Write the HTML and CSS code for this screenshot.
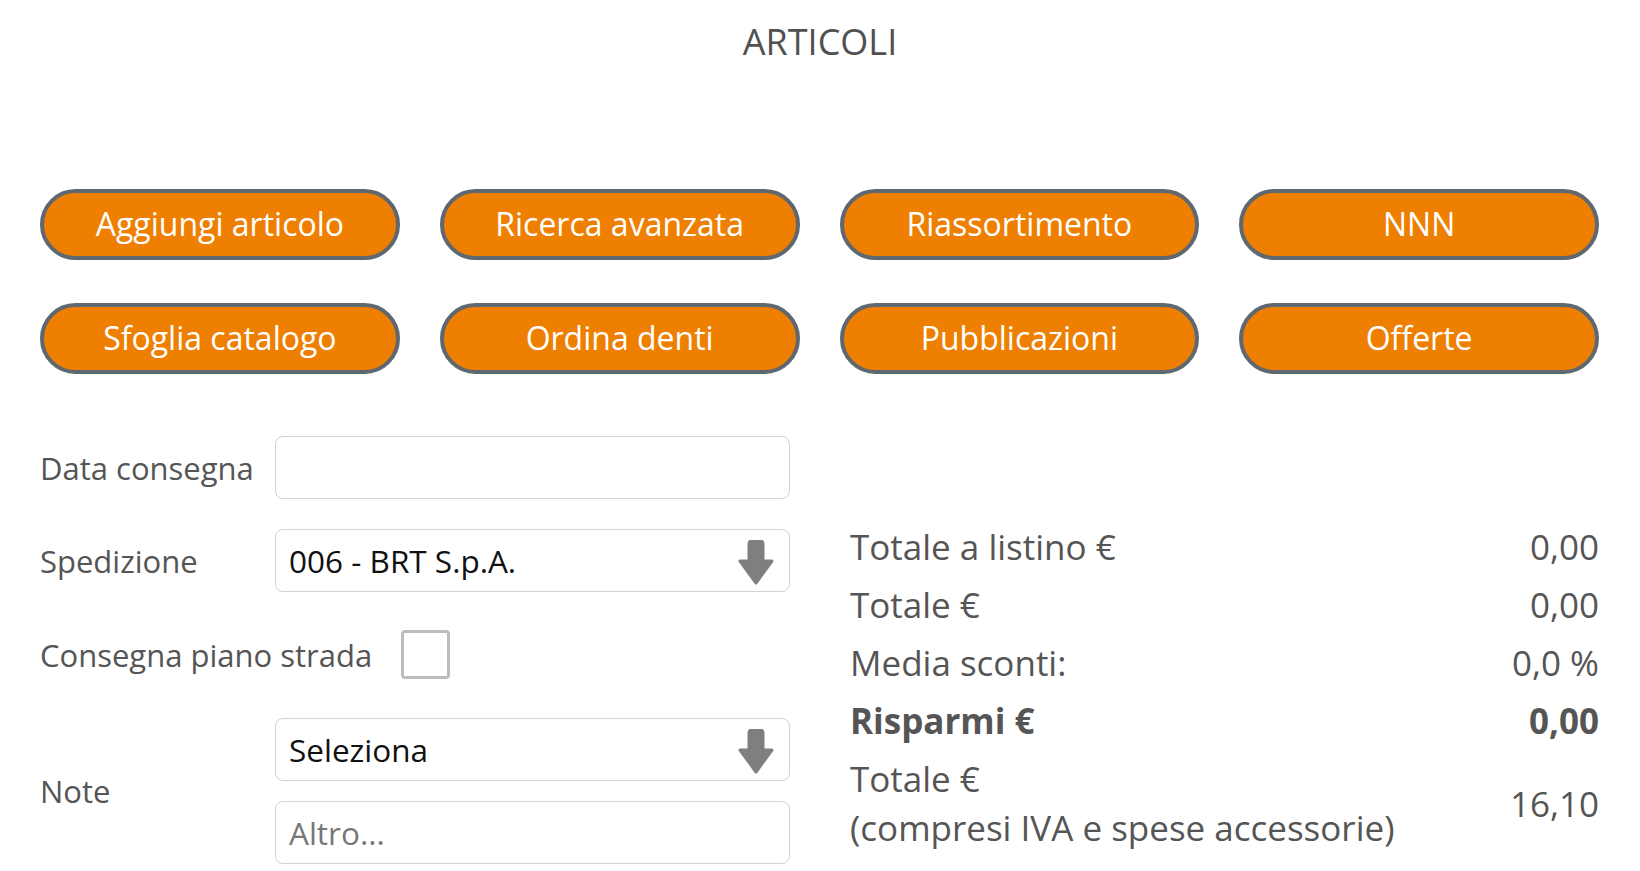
FILE: index.html
```html
<!DOCTYPE html>
<html lang="it">
<head>
    <meta charset="UTF-8">
    <meta name="viewport" content="width=device-width, initial-scale=1.0">
    <title>Articoli</title>
    <link rel="stylesheet" href="styles.css">
</head>
<body>
    <header class="title">ARTICOLI</header>

    <div class="actions">
        <button class="btn">Aggiungi articolo</button>
        <button class="btn">Ricerca avanzata</button>
        <button class="btn">Riassortimento</button>
        <button class="btn">NNN</button>
        <button class="btn">Sfoglia catalogo</button>
        <button class="btn">Ordina denti</button>
        <button class="btn">Pubblicazioni</button>
        <button class="btn">Offerte</button>
    </div>

    <div class="bottom">
        <div class="form">
            <div class="row">
                <label class="label">Data consegna</label>
                <div class="field"></div>
            </div>
            <div class="row">
                <label class="label">Spedizione</label>
                <div class="field select">
                    <span>006 - BRT S.p.A.</span>
                    <svg class="arrow" viewBox="0 0 40 46" width="40" height="46">
                        <path d="M13 4 Q13 1 16 1 H24 Q27 1 27 4 V21 H36 L20 43 L4 21 H13 Z" fill="#7f7f7f" stroke="#7f7f7f" stroke-width="3" stroke-linejoin="round"/>
                    </svg>
                </div>
            </div>
            <div class="row check-row">
                <label class="label">Consegna piano strada</label>
                <div class="checkbox"></div>
            </div>
            <div class="row note-row">
                <label class="label">Note</label>
                <div class="note-fields">
                    <div class="field select">
                        <span>Seleziona</span>
                        <svg class="arrow" viewBox="0 0 40 46" width="40" height="46">
                            <path d="M13 4 Q13 1 16 1 H24 Q27 1 27 4 V21 H36 L20 43 L4 21 H13 Z" fill="#7f7f7f" stroke="#7f7f7f" stroke-width="3" stroke-linejoin="round"/>
                        </svg>
                    </div>
                    <div class="field placeholder">Altro...</div>
                </div>
            </div>
        </div>

        <div class="summary">
            <div class="sum-row"><span>Totale a listino €</span><span>0,00</span></div>
            <div class="sum-row"><span>Totale €</span><span>0,00</span></div>
            <div class="sum-row"><span>Media sconti:</span><span>0,0 %</span></div>
            <div class="sum-row bold"><span>Risparmi €</span><span>0,00</span></div>
            <div class="sum-row"><span>Totale €<br>(compresi IVA e spese accessorie)</span><span>16,10</span></div>
        </div>
    </div>
</body>
</html>
```

FILE: styles.css
```css
body {
    margin: 0;
    padding: 0;
    font-family: "Open Sans", Lato, sans-serif;
    color: #555;
    background: #fff;
    overflow: hidden;
}

.title {
    text-align: center;
    font-size: 36px;
    color: #505050;
    padding-top: 21px;
    height: 168px;
    line-height: 42px;
}

.actions {
    display: grid;
    grid-template-columns: repeat(4, 1fr);
    gap: 43px 40px;
    padding: 0 41px 0 40px;
}

.btn {
    height: 71px;
    background: #ee7f00;
    border: 4px solid #5f6870;
    border-radius: 36px;
    color: #fff;
    font-family: "Open Sans", sans-serif;
    font-size: 32px;
    padding: 0 0 3px;
    cursor: pointer;
}

.bottom {
    display: flex;
    gap: 60px;
    padding: 62px 41px 0 40px;
}

.form {
    width: 750px;
    display: flex;
    flex-direction: column;
    gap: 30px;
}

.row {
    display: flex;
    align-items: center;
}

.label {
    width: 235px;
    font-size: 31px;
    color: #555;
    flex-shrink: 0;
}

.field {
    flex: 1;
    height: 63px;
    border: 1px solid #d2d2d2;
    border-radius: 8px;
    box-sizing: border-box;
    display: flex;
    align-items: center;
    padding: 0 13px;
    font-size: 31.5px;
    color: #111;
}

.select {
    justify-content: space-between;
}

.arrow {
    display: block;
    margin-top: 4px;
}

.placeholder {
    color: #777;
}

.check-row {
    margin-top: 8px;
}

.check-row .label {
    width: auto;
    margin-right: 29px;
}

.checkbox {
    width: 43px;
    height: 43px;
    border: 3px solid #bdbdbd;
    border-radius: 4px;
}

.note-row {
    margin-top: 9px;
}

.note-fields {
    flex: 1;
    display: flex;
    flex-direction: column;
    gap: 20px;
}

.note-fields .field {
    flex: none;
}

.summary {
    flex: 1;
    display: flex;
    flex-direction: column;
    gap: 9px;
    padding-top: 86px;
}

.sum-row {
    display: flex;
    justify-content: space-between;
    align-items: center;
    font-size: 35px;
    line-height: 49px;
    color: #555;
}

.sum-row.bold {
    font-weight: bold;
}
```
